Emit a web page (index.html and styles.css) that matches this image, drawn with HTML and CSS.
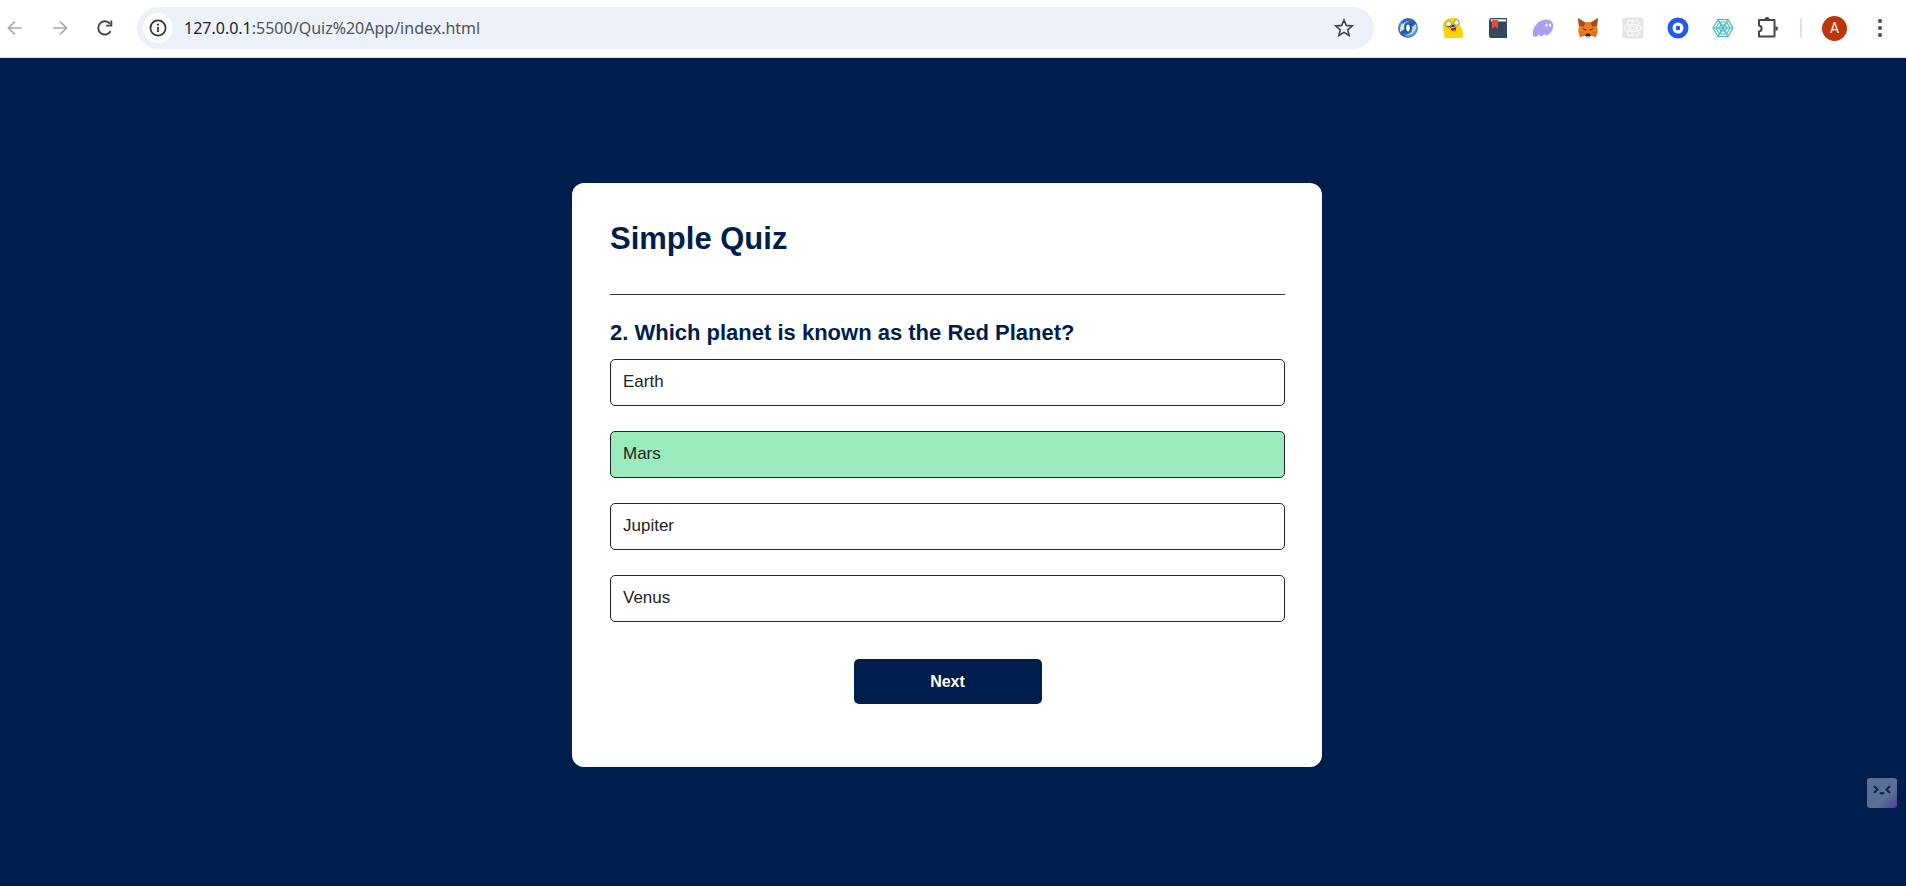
FILE: index.html
```html
<!DOCTYPE html>
<html lang="en">
<head>
<meta charset="utf-8">
<meta name="viewport" content="width=device-width, initial-scale=1">
<title>Quiz App</title>
<link rel="stylesheet" href="styles.css">
</head>
<body>
<header class="toolbar">
  <nav class="nav" aria-label="History">
    <button class="tool muted" aria-label="Back"><svg width="16" height="16" viewBox="0 0 16 16"><path d="M15 8H2M8 1.500L1.500 8L8 14.500" fill="none" stroke="currentColor" stroke-width="1.700"/></svg></button>
    <button class="tool muted" aria-label="Forward"><svg width="16" height="16" viewBox="0 0 16 16"><path d="M1 8H14M8 1.500L14.500 8L8 14.500" fill="none" stroke="currentColor" stroke-width="1.700"/></svg></button>
    <button class="tool" aria-label="Reload"><svg width="18" height="18" viewBox="0 0 18 18"><path d="M14.600 12.200A6.600 6.600 0 1 1 14 4.800" fill="none" stroke="currentColor" stroke-width="2"/><path d="M16.300 1.500V7.600H10.200V5.700H14.400V1.500Z" fill="currentColor"/></svg></button>
  </nav>
  <div class="address">
    <button class="info" aria-label="Site information"><svg width="18" height="18" viewBox="0 0 18 18"><circle cx="9" cy="9" r="7.600" fill="none" stroke="currentColor" stroke-width="1.700"/><path d="M9 8V13" stroke="currentColor" stroke-width="1.700"/><circle cx="9" cy="5.600" r="1.100" fill="currentColor"/></svg></button>
    <div class="url" role="textbox" aria-label="Address"><span class="host">127.0.0.1</span>:5500/Quiz%20App/index.html</div>
    <button class="star" aria-label="Bookmark"><svg width="20" height="20" viewBox="0 0 20 20"><path d="M10 2L12.300 7.400L18.200 7.900L13.700 11.800L15.100 17.500L10 14.400L4.900 17.500L6.300 11.800L1.800 7.900L7.700 7.400Z" fill="none" stroke="currentColor" stroke-width="1.600"/></svg></button>
  </div>
  <div class="extensions">
    <button class="tool" aria-label="Swirl"><svg width="22" height="22" viewBox="0 0 22 22"><defs><linearGradient id="swirl" x1="0" y1="0" x2="1" y2="1"><stop offset="0" stop-color="#78a7dc"/><stop offset=".5" stop-color="#215a9d"/><stop offset="1" stop-color="#8ab9e8"/></linearGradient></defs><circle cx="11" cy="11" r="10" fill="url(#swirl)"/><path d="M3 15C2 7 8 2 15 4C9 3 6 7 7.500 12Z" fill="#d5e7f8"/><path d="M19 7C21 14 14 20 7 18C14 18 16 14 15 10Z" fill="#b9d6f1"/><path d="M5 5C8 1 14 1 17 4C13 3 9 3 6 7Z" fill="#285f9e"/><ellipse cx="11" cy="11" rx="3.200" ry="4.600" fill="#1e508e"/><ellipse cx="11" cy="11" rx="1.800" ry="3.400" fill="#fff"/></svg></button>
    <button class="tool" aria-label="Yellow character"><svg width="22" height="22" viewBox="0 0 22 22"><path d="M2 21C3 17 1 14 1 9C1 4 5 1 10 1H13C17 1 18 6 18 9C21 12 21 16 21 21Z" fill="#fbd408"/><circle cx="6.500" cy="7" r="3" fill="#fff" stroke="#3b351a" stroke-width=".5"/><circle cx="14.500" cy="5.500" r="2.700" fill="#fff" stroke="#3b351a" stroke-width=".5"/><path d="M4.500 9A3 3 0 0 0 9 8.500" fill="none" stroke="#242017" stroke-width=".8"/><ellipse cx="11" cy="8.800" rx="1.600" ry="1.100" fill="#21201b"/><path d="M8 11C9 8.500 14 8.500 14 11" fill="none" stroke="#51430d" stroke-width=".7"/><path d="M8.500 11.500L14 10.500L13.500 14H10Z" fill="#7b171d"/><path d="M10.500 12.500H13V14.500H11Z" fill="#f06d72"/></svg></button>
    <button class="tool" aria-label="Notebook"><svg width="22" height="22" viewBox="0 0 22 22"><path d="M2 4Q2 1 5 1H20V21H4Q2 21 2 19Z" fill="#34495e"/><path d="M4 2.300H19V4.500H4Z" fill="#f3f5f6"/><path d="M5 3H11V12L8 9.500L5 12Z" fill="#e64c3c"/></svg></button>
    <button class="tool" aria-label="Ghost"><svg width="22" height="22" viewBox="0 0 22 22"><path d="M.8 17C.8 9 7 2.500 14.500 2.500C19 2.500 21.500 5.500 21.200 9C21 14 17 18.500 14.200 18.500C12.500 18.500 12.500 17 12.500 17C10 20 7.500 19.500 7.500 17.500C5 20.500 .8 20.500 .8 17Z" fill="#ab9ff2"/><ellipse cx="14.400" cy="8" rx="1.100" ry="1.600" fill="#fff"/><ellipse cx="18.100" cy="8" rx="1.100" ry="1.600" fill="#fff"/></svg></button>
    <button class="tool" aria-label="Fox"><svg width="22" height="22" viewBox="0 0 22 22"><path d="M1 1L8 5H14L21 1L20 9L21 14L19 20L13.500 18.500L12.500 20H9.500L8.500 18.500L3 20L1 14L2 9Z" fill="#f58220"/><path d="M1 1L8.500 6L7 10L2 9Z" fill="#a34d1f"/><path d="M21 1L13.500 6L15 10L20 9Z" fill="#a34d1f"/><path d="M7 10L8.500 6H13.500L15 10L12.500 17H9.500Z" fill="#ef7c20"/><path d="M5.500 11L9.300 12.500L9 14L5.500 12Z M16.500 11L12.700 12.500L13 14L16.500 12Z" fill="#713517"/><path d="M2 14L7 14.500L8.500 18.500L3 20Z M20 14L15 14.500L13.500 18.500L19 20Z" fill="#e46d20"/><path d="M9 16.500H13L13.500 18.500L12.500 20H9.500L8.500 18.500Z" fill="#252a31"/><path d="M9.500 19H12.500V21H9.500Z" fill="#c5b9ad"/></svg></button>
    <button class="tool" aria-label="Inactive tools"><svg width="22" height="22" viewBox="0 0 22 22"><rect x=".5" y=".5" width="21" height="21" rx="2" fill="#e4e4e4"/><g fill="none" stroke="#fff" stroke-width=".8"><ellipse cx="11" cy="11" rx="9" ry="3.500"/><ellipse cx="11" cy="11" rx="9" ry="3.500" transform="rotate(60 11 11)"/><ellipse cx="11" cy="11" rx="9" ry="3.500" transform="rotate(120 11 11)"/><circle cx="11" cy="11" r="2.200"/><circle cx="11" cy="11" r="8" stroke-dasharray="2 2"/></g></svg></button>
    <button class="tool" aria-label="Wallet"><svg width="22" height="22" viewBox="0 0 22 22"><circle cx="11" cy="11" r="8" fill="#fff" stroke="#1f5af2" stroke-width="5"/><rect x="9" y="9" width="4" height="4" rx=".5" fill="#1f5af2"/></svg></button>
    <button class="tool" aria-label="Web"><svg width="22" height="22" viewBox="0 0 22 22"><g fill="none" stroke="#37b7c8" stroke-width="1.200"><path d="M6 2.500H16L21 11L16 19.500H6L1 11Z M7.500 5H14.500L18 11L14.500 17H7.500L4 11Z M9 8H13L15 11L13 14H9L7 11Z" /><path d="M1 11H21M6 2.500L16 19.500M16 2.500L6 19.500"/></g></svg></button>
    <button class="tool" aria-label="Extensions"><svg width="22" height="22" viewBox="0 0 22 22"><path d="M2 3H17.500V19.500H2V14.500C5.500 14 5.500 9 2 8.500Z" fill="none" stroke="currentColor" stroke-width="2" stroke-linejoin="round"/><path d="M7.500 2.500A2.500 2.500 0 0 1 12.500 2.500Z M18.500 9A2.500 2.500 0 0 1 18.500 14Z" fill="currentColor"/></svg></button>
  </div>
  <div class="account">
    <span class="rule"></span>
    <button class="avatar" aria-label="Account">A</button>
    <button class="more" aria-label="Menu"><svg width="6" height="20" viewBox="0 0 6 20"><g fill="currentColor"><circle cx="3" cy="3" r="2"/><circle cx="3" cy="10" r="2"/><circle cx="3" cy="17" r="2"/></g></svg></button>
  </div>
</header>
<main class="page">
  <section class="app">
    <h1 class="title">Simple Quiz</h1>
    <div class="quiz">
      <h2 class="question">2. Which planet is known as the Red Planet?</h2>
      <div class="answers">
        <button class="option">Earth</button>
        <button class="option correct">Mars</button>
        <button class="option">Jupiter</button>
        <button class="option">Venus</button>
      </div>
      <button class="next">Next</button>
    </div>
  </section>
</main>
<button class="assistant" aria-label="Assistant"><svg width="30" height="30" viewBox="0 0 30 30"><path d="M7 8L10.500 11.500L7 15M23 8L19.500 11.500L23 15M13 14.500Q15 16.500 17 14.500" fill="none" stroke="#0c2448" stroke-width="2"/></svg></button>
</body>
</html>
```
FILE: styles.css
```css
* {
  box-sizing: border-box;
  margin: 0;
  padding: 0;
}

body {
  min-height: 100vh;
  display: flex;
  flex-direction: column;
  background: #001e4d;
  font-family: "Liberation Sans", Arial, sans-serif;
}

button {
  border: 0;
  background: none;
  color: inherit;
  font-family: inherit;
  cursor: pointer;
}

svg {
  display: block;
}

.toolbar {
  display: flex;
  align-items: center;
  height: 58px;
  padding-bottom: 1px;
  background: #fff;
  border-bottom: 1px solid #dfe3ea;
  color: #474747;
}

.nav {
  display: flex;
  padding-right: 10px;
  margin-left: -8px;
}

.tool {
  display: flex;
  flex: none;
  align-items: center;
  justify-content: center;
  width: 45px;
  height: 42px;
}

.muted {
  color: #a8a8a8;
}

.address {
  flex: 1;
  display: flex;
  align-items: center;
  height: 42px;
  padding: 0 20px 0 6px;
  border-radius: 21px;
  background: #ecf1fa;
}

.info {
  display: flex;
  align-items: center;
  justify-content: center;
  width: 30px;
  height: 30px;
  border-radius: 50%;
  background: #fff;
  color: #303030;
}

.url {
  flex: 1;
  padding-left: 11px;
  font-family: "Noto Sans", "Open Sans", sans-serif;
  font-size: 16px;
  color: #505357;
}

.host {
  color: #1f1f1f;
}

.extensions {
  display: flex;
  padding-left: 11px;
}

.account {
  display: flex;
  align-items: center;
  padding: 0 23px 0 10px;
}

.rule {
  width: 2px;
  height: 20px;
  background: #d3e3fd;
}

.avatar {
  width: 25px;
  height: 25px;
  margin: 0 30px 0 20px;
  border-radius: 50%;
  background: #bf360c;
  color: #fff;
  font-family: Roboto, sans-serif;
  font-size: 14px;
}

.page {
  flex: 1;
  padding: 125px 12px 60px 0;
}

.app {
  width: 90%;
  max-width: 750px;
  margin: 0 auto;
  padding: 37px 37px 63px 38px;
  border-radius: 12px;
  background: #fff;
}

.title {
  padding-bottom: 37px;
  border-bottom: 1px solid #333;
  color: #001e4d;
  font-size: 31px;
  line-height: 37px;
}

.quiz {
  display: flex;
  flex-direction: column;
  padding-top: 24px;
}

.question {
  color: #001e4d;
  font-size: 22px;
  line-height: 28px;
}

.answers {
  display: flex;
  flex-direction: column;
  gap: 25px;
  padding-top: 12px;
}

.option {
  height: 47px;
  padding: 0 12px 2px;
  border: 1px solid #222;
  border-radius: 5px;
  background: #fff;
  color: #222;
  font-size: 17px;
  text-align: left;
}

.correct {
  background: #9aeabc;
}

.next {
  align-self: center;
  width: 188px;
  height: 45px;
  margin-top: 37px;
  border-radius: 5px;
  background: #001e4d;
  color: #fff;
  font-size: 16px;
  font-weight: 700;
}

.assistant {
  position: fixed;
  right: 9px;
  bottom: 78px;
  border-radius: 3px;
  background: linear-gradient(135deg, #5b7094 65%, #493c9c);
}
```
